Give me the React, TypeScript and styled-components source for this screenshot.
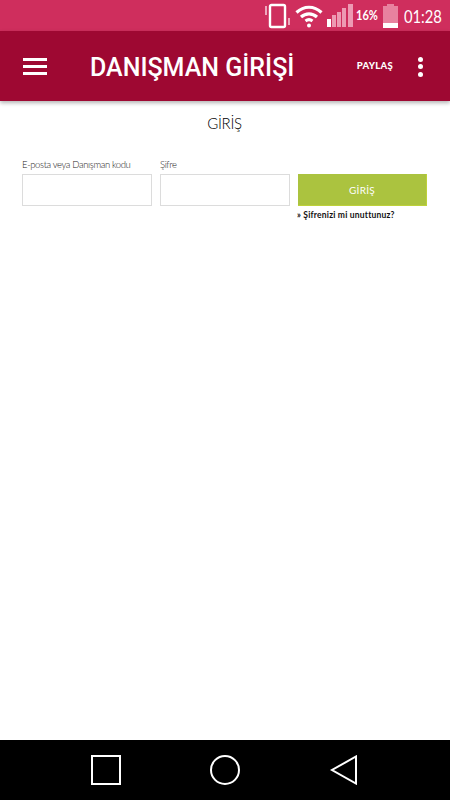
import React from 'react';
import styled, { createGlobalStyle } from 'styled-components';

const GlobalStyle = createGlobalStyle`
  html, body {
    margin: 0;
    padding: 0;
    background: #fff;
  }
`;

const Screen = styled.div`
  width: 450px;
  height: 800px;
  display: flex;
  flex-direction: column;
  overflow: hidden;
  font-family: Lato, "Open Sans", sans-serif;
`;

const StatusBar = styled.div`
  height: 31px;
  flex: none;
  box-sizing: border-box;
  background: #cf2e5d;
  display: flex;
  align-items: center;
  padding-left: 265px;
  color: #fff;
`;

const BatteryText = styled.span`
  width: 27px;
  font: 700 13.5px/1 Lato, sans-serif;
  transform: scaleX(0.82);
  transform-origin: left center;
`;

const Clock = styled.span`
  margin-left: 6px;
  font: 400 18px/1 Lato, sans-serif;
  transform: scaleX(0.82);
  transform-origin: left center;
`;

const AppBar = styled.header`
  height: 70px;
  flex: none;
  background: #9e0832;
  box-shadow: 0 2px 4px rgba(0, 0, 0, 0.3);
  display: flex;
  align-items: center;
  padding: 0 27px 0 23px;
  position: relative;
  z-index: 1;
`;

const Burger = styled.div`
  width: 24px;
  display: flex;
  flex-direction: column;
  gap: 4px;
  margin-top: 1px;
`;

const BurgerLine = styled.span`
  height: 3px;
  background: #fff;
`;

const Title = styled.h1`
  margin: 3px 0 0 43px;
  flex: 1;
  font: 500 25px/1 Roboto, sans-serif;
  color: #fff;
`;

const Share = styled.span`
  font: 900 9.5px/1 Lato, sans-serif;
  letter-spacing: 0.3px;
  color: #fff;
  margin: 0 25px 0 0;
`;

const Dots = styled.div`
  display: flex;
  flex-direction: column;
  gap: 2.5px;
  margin-top: 1px;
`;

const Dot = styled.span`
  width: 5px;
  height: 5px;
  border-radius: 50%;
  background: #fff;
`;

const Main = styled.main`
  flex: 1;
  background: #fff;
  padding: 13px 23px 0 22px;
`;

const Heading = styled.h2`
  margin: 0 0 27px;
  text-align: center;
  font: 300 15px/18px Lato, sans-serif;
  letter-spacing: -0.3px;
  color: #000;
`;

const Form = styled.form`
  display: grid;
  grid-template-columns: 130px 130px 129px;
  column-gap: 8px;
  align-items: end;
`;

const Field = styled.label`
  display: flex;
  flex-direction: column;
  gap: 3px;
  font: 300 9.5px/12px Lato, sans-serif;
  letter-spacing: -0.38px;
  color: #222;
`;

const Input = styled.input`
  box-sizing: border-box;
  width: 100%;
  height: 32px;
  border: 1px solid #dcdcdc;
  background: #fff;
  outline: none;
`;

const SubmitButton = styled.button`
  height: 32px;
  box-sizing: border-box;
  border: none;
  border-right: 1px solid #bdd13a;
  border-bottom: 1px solid #bdd13a;
  padding: 0;
  background: #abc33f;
  color: #fff;
  font: 400 10px/1 Lato, sans-serif;
  letter-spacing: 0.3px;
`;

const Forgot = styled.a`
  grid-column: 3;
  margin: 3px 0 0 -1px;
  font: 700 8.5px/12px Lato, sans-serif;
  letter-spacing: 0.2px;
  color: #111;
`;

const NavBar = styled.nav`
  height: 60px;
  flex: none;
  background: #000;
  display: flex;
  align-items: center;
  justify-content: space-between;
  padding: 0 91px;
`;

const Icon = styled.svg`
  display: block;
  flex: none;
`;

const App: React.FC = () => {
  return (
    <Screen>
      <GlobalStyle />
      <StatusBar>
        <Icon width="26" height="26" viewBox="0 0 26 26" fill="none" stroke="#fff">
          <rect x="5" y="2" width="15" height="22" rx="1.5" strokeWidth="2.4" />
          <path d="M1 3v9M24 15v7" strokeWidth="1.8" stroke="#f0b5c7" />
        </Icon>
        <Icon width="28" height="24" viewBox="0 0 28 24" fill="none" stroke="#fff" strokeWidth="3.2" style={{ marginLeft: 4 }}>
          <path d="M1.500 8.500c7.500-7 17.500-7 25 0M6 13c4.800-4.200 11.200-4.200 16 0M10.500 17c2-1.500 5-1.500 7 0" />
          <circle cx="14" cy="21.5" r="2" fill="#fff" stroke="none" />
        </Icon>
        <Icon width="26" height="24" viewBox="0 0 26 24" style={{ marginLeft: 4, marginRight: 3 }}>
          <rect x="0" y="15" width="4" height="8" fill="#fff" />
          <rect x="5" y="11" width="4" height="12" fill="#ed9ab3" />
          <rect x="10" y="8" width="4" height="15" fill="#ed9ab3" />
          <rect x="15" y="4" width="4" height="19" fill="#ed9ab3" />
          <rect x="21" y="0" width="5" height="23" fill="#ed9ab3" />
        </Icon>
        <BatteryText>16%</BatteryText>
        <Icon width="15" height="24" viewBox="0 0 15 24">
          <rect x="4" y="0" width="7" height="3" fill="#e8829f" />
          <rect x="0" y="2" width="15" height="17" fill="#e8829f" />
          <rect x="0" y="19" width="15" height="5" fill="#fff" />
        </Icon>
        <Clock>01:28</Clock>
      </StatusBar>
      <AppBar>
        <Burger>
          <BurgerLine />
          <BurgerLine />
          <BurgerLine />
        </Burger>
        <Title>DANIŞMAN GİRİŞİ</Title>
        <Share>PAYLAŞ</Share>
        <Dots>
          <Dot />
          <Dot />
          <Dot />
        </Dots>
      </AppBar>
      <Main>
        <Heading>GİRİŞ</Heading>
        <Form>
          <Field>
            E-posta veya Danışman kodu
            <Input type="text" />
          </Field>
          <Field>
            Şifre
            <Input type="password" />
          </Field>
          <SubmitButton type="button">GİRİŞ</SubmitButton>
          <Forgot>» Şifrenizi mi unuttunuz?</Forgot>
        </Form>
      </Main>
      <NavBar>
        <Icon width="30" height="30" viewBox="0 0 30 30" fill="none" stroke="#fff" strokeWidth="2">
          <rect x="1" y="1" width="28" height="28" />
        </Icon>
        <Icon width="30" height="30" viewBox="0 0 30 30" fill="none" stroke="#fff" strokeWidth="2">
          <circle cx="15" cy="15" r="14" />
        </Icon>
        <Icon width="30" height="30" viewBox="0 0 30 30" fill="none" stroke="#fff" strokeWidth="2">
          <path d="M27 1.500v27L3 15z" />
        </Icon>
      </NavBar>
    </Screen>
  );
};

export default App;
